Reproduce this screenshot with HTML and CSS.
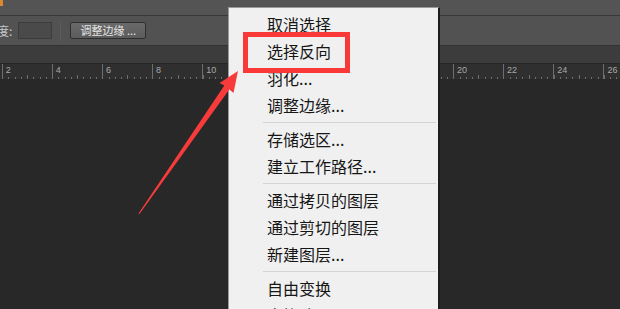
FILE: index.html
```html
<!DOCTYPE html>
<html lang="zh">
<head>
<meta charset="utf-8">
<link rel="stylesheet" href="styles.css">
</head>
<body>
<div class="app">
  <div class="titlebar"><span class="logo"></span></div>
  <div class="options">
    <span class="label">度:</span>
    <span class="field"></span>
    <span class="divider"></span>
    <span class="btn">调整边缘 ...</span>
  </div>
  <div class="tabs"></div>
  <div class="ruler">
    <span class="mark">2</span><span class="mark">4</span><span class="mark">6</span><span class="mark">8</span><span class="mark">10</span><span class="mark">12</span><span class="mark">14</span><span class="mark">16</span><span class="mark">18</span><span class="mark">20</span><span class="mark">22</span><span class="mark">24</span><span class="mark">26</span>
  </div>
  <div class="canvas"></div>

  <ul class="ctx">
    <li class="item">取消选择</li>
    <li class="item">选择反向</li>
    <li class="item">羽化...</li>
    <li class="item">调整边缘...</li>
    <li class="sep"></li>
    <li class="item">存储选区...</li>
    <li class="item">建立工作路径...</li>
    <li class="sep"></li>
    <li class="item">通过拷贝的图层</li>
    <li class="item">通过剪切的图层</li>
    <li class="item">新建图层...</li>
    <li class="sep"></li>
    <li class="item">自由变换</li>
    <li class="item">变换选区</li>
  </ul>

  <div class="highlight"></div>

  <svg class="arrow" width="620" height="309" viewBox="0 0 620 309">
    <polygon points="238,71 233.5,93 229.3,89.4 139.5,214 138.5,213.4 224.3,85.6 219.6,83" fill="#f73b3b"/>
  </svg>
</div>
</body>
</html>
```

FILE: styles.css
```css
* { box-sizing: border-box; }
html, body { margin: 0; padding: 0; }
body {
  width: 620px;
  height: 309px;
  overflow: hidden;
  background: #282828;
  font-family: "Noto Sans CJK SC", "Noto Sans", sans-serif;
}
.app {
  position: relative;
  width: 620px;
  height: 309px;
  display: flex;
  flex-direction: column;
  overflow: hidden;
}
.titlebar {
  height: 16px;
  background: #545454;
  border-bottom: 1px solid #383838;
  flex: none;
}
.logo {
  display: block;
  width: 3px;
  height: 6px;
  background: #d9892e;
}
.options {
  height: 30px;
  flex: none;
  background: #525252;
  border-bottom: 1px solid #333333;
  display: flex;
  align-items: center;
}
.label {
  color: #c8c8c8;
  font-size: 12px;
  line-height: 17px;
  margin-left: -3px;
  white-space: nowrap;
}
.field {
  width: 34px;
  height: 17px;
  margin-left: 6px;
  background: #4a4a4a;
  border: 1px solid #3c3c3c;
}
.divider {
  width: 1px;
  height: 20px;
  margin-left: 8px;
  background: #3d3d3d;
  border-right: 1px solid #5c5c5c;
}
.btn {
  width: 76px;
  height: 17px;
  margin-left: 9px;
  border: 1px solid #2f2f2f;
  border-radius: 2px;
  background: linear-gradient(#6a6a6a, #5c5c5c);
  color: #e6e6e6;
  font-size: 11px;
  line-height: 15px;
  text-align: center;
  white-space: nowrap;
}
.tabs {
  height: 17px;
  flex: none;
  background: #3c3c3c;
}
.ruler {
  height: 16px;
  flex: none;
  background-color: #2f2f2f;
  border-top: 1px solid #262626;
  display: flex;
  padding-left: 1.7px;
  background-image:
    repeating-linear-gradient(90deg, #6e6e6e 0 1px, transparent 1px 25.075px),
    repeating-linear-gradient(90deg, #6e6e6e 0 1px, transparent 1px 6.26875px);
  background-size: 100% 4px, 100% 2px;
  background-position: 1.7px 100%, 1.7px 100%;
  background-repeat: no-repeat;
}
.mark {
  flex: none;
  width: 50.15px;
  height: 100%;
  border-left: 1px solid #6e6e6e;
  color: #a9a9a9;
  font-family: "Liberation Sans", sans-serif;
  font-size: 9px;
  line-height: 10px;
  padding-left: 3px;
  padding-top: 1px;
}
.canvas {
  flex: 1;
  background: #282828;
}
.ctx {
  position: absolute;
  left: 228px;
  top: 7px;
  width: 212px;
  height: 320px;
  margin: 0;
  padding: 3px 0 0 0;
  list-style: none;
  background: #f0f0f0;
  border: 1px solid #9a9a9a;
  border-right: 2px solid #1e1e1e;
}
.item {
  height: 27px;
  line-height: 27px;
  padding-left: 38px;
  font-size: 16px;
  color: #161616;
  white-space: nowrap;
}
.sep {
  height: 7px;
  margin-left: 34px;
  margin-right: 2px;
  display: flex;
  align-items: center;
}
.sep::before {
  content: "";
  display: block;
  width: 100%;
  height: 1px;
  background: #d4d4d4;
}
.highlight {
  position: absolute;
  left: 243px;
  top: 32px;
  width: 107px;
  height: 41px;
  border: 5px solid #f93838;
}
.arrow {
  position: absolute;
  left: 0;
  top: 0;
  pointer-events: none;
}
```
